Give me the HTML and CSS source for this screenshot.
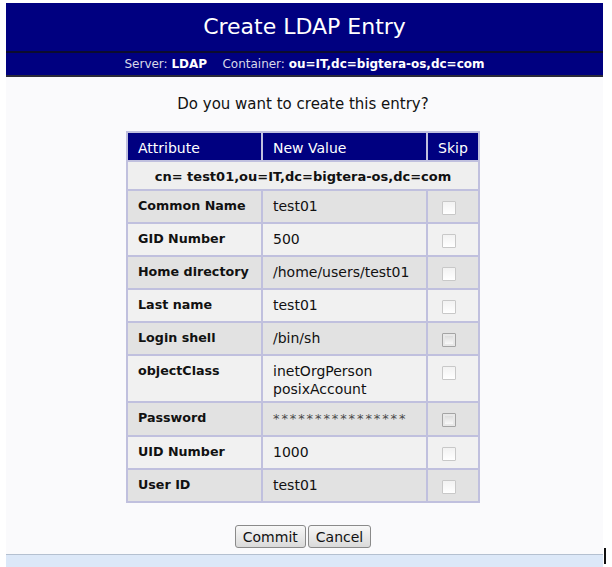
FILE: index.html
```html
<!DOCTYPE html>
<html>
<head>
<meta charset="utf-8">
<link rel="stylesheet" href="styles.css">
</head>
<body>
<div class="page">
  <div class="title">Create LDAP Entry</div>
  <div class="sub">Server: <b>LDAP</b>&nbsp;&nbsp;&nbsp; Container: <b>ou=IT,dc=bigtera-os,dc=com</b></div>
  <div class="content">
    <p class="question">Do you want to create this entry?</p>
    <table class="entry">
      <colgroup><col class="c-attr"><col class="c-val"><col class="c-skip"></colgroup>
      <thead>
        <tr><th>Attribute</th><th>New Value</th><th>Skip</th></tr>
      </thead>
      <tbody>
        <tr class="dn"><td colspan="3">cn= test01,ou=IT,dc=bigtera-os,dc=com</td></tr>
        <tr class="dark"><td class="attr">Common Name</td><td>test01</td><td class="skip"><span class="cb"></span></td></tr>
        <tr class="light"><td class="attr">GID Number</td><td>500</td><td class="skip"><span class="cb"></span></td></tr>
        <tr class="dark"><td class="attr">Home directory</td><td>/home/users/test01</td><td class="skip"><span class="cb"></span></td></tr>
        <tr class="light"><td class="attr">Last name</td><td>test01</td><td class="skip"><span class="cb"></span></td></tr>
        <tr class="dark"><td class="attr">Login shell</td><td>/bin/sh</td><td class="skip"><span class="cb cb-hover"></span></td></tr>
        <tr class="light"><td class="attr">objectClass</td><td>inetOrgPerson<br>posixAccount</td><td class="skip"><span class="cb"></span></td></tr>
        <tr class="dark"><td class="attr">Password</td><td class="pw">****************</td><td class="skip"><span class="cb cb-hover"></span></td></tr>
        <tr class="light"><td class="attr">UID Number</td><td>1000</td><td class="skip"><span class="cb"></span></td></tr>
        <tr class="dark"><td class="attr">User ID</td><td>test01</td><td class="skip"><span class="cb"></span></td></tr>
      </tbody>
    </table>
    <div class="buttons">
      <button class="btn">Commit</button>
      <button class="btn">Cancel</button>
    </div>
  </div>
  <div class="footer"></div>
</div>
<span class="cursor"></span>
</body>
</html>
```
FILE: styles.css
```css
html, body {
  margin: 0;
  padding: 0;
  background: #ffffff;
}
body {
  font-family: "DejaVu Sans", Verdana, sans-serif;
  position: relative;
  height: 567px;
  overflow: hidden;
}
.page {
  margin: 3px 9px 0 6px;
  width: 597px;
}
.title {
  background: #000080;
  color: #ffffff;
  height: 48px;
  line-height: 48px;
  text-align: center;
  font-size: 22px;
  border-bottom: 2px solid #0c0c2e;
}
.sub {
  background: #000080;
  color: #d8d8e8;
  height: 22px;
  line-height: 22px;
  text-align: center;
  font-size: 12px;
  border-bottom: 2px solid #2a2a3a;
}
.sub b {
  color: #ffffff;
}
.content {
  background: #fafafc;
  padding: 18px 3px 6px 0;
}
.question {
  margin: 0 0 18px;
  text-align: center;
  font-size: 15px;
  line-height: 18px;
  color: #111;
}
.entry {
  margin: 0 auto;
  width: 352px;
  table-layout: fixed;
  border-collapse: collapse;
  border: 2px solid #c0c0de;
  font-size: 14px;
  color: #111;
}
.c-attr { width: 135px; }
.c-val { width: 165px; }
.c-skip { width: 52px; }
.entry th, .entry td {
  border: 2px solid #c0c0de;
  text-align: left;
  vertical-align: top;
  white-space: nowrap;
}
.entry th {
  background: #000080;
  color: #ffffff;
  font-weight: normal;
  line-height: 17px;
  padding: 7px 4px 3px 10px;
}
.entry td {
  padding: 6px 4px 3px 10px;
  line-height: 18px;
  height: 22px;
}
.entry tr.dn td {
  background: #efefef;
  font-weight: bold;
  font-size: 13px;
  text-align: center;
  line-height: 17px;
  height: auto;
  padding: 6px 4px 4px;
}
.entry tr.dark td { background: #e2e2e2; }
.entry tr.light td { background: #f1f1f1; }
.entry td.attr {
  font-weight: bold;
  font-size: 12.7px;
}
.entry td.skip {
  padding-left: 14px;
  padding-top: 10px;
  height: 18px;
}
.entry td.pw {
  font-size: 13px;
  letter-spacing: 1.9px;
  color: #4a4a4a;
  padding-top: 7px;
  height: 22px;
}
.cb {
  display: block;
  width: 12px;
  height: 12px;
  border: 1px solid #c8c8c8;
  background: linear-gradient(#f2f2f2, #ffffff);
  border-radius: 1px;
}
.cb-hover {
  border-color: #a4a4a4;
  box-shadow: inset 0 0 0 2px #e8e8e8;
  background: linear-gradient(#d6d6d6, #ffffff);
}
.buttons {
  margin-top: 22px;
  display: flex;
  justify-content: center;
  gap: 2px;
}
.btn {
  font-family: "DejaVu Sans", Verdana, sans-serif;
  font-size: 14px;
  height: 23px;
  padding: 0 7px;
  margin: 0;
  border: 1px solid #8a8a8a;
  border-radius: 3px;
  background: linear-gradient(#f8f8f8, #dadada);
  color: #111;
}
.footer {
  height: 13px;
  border-top: 1px solid #b4c0d0;
  background: #dce8f8;
}
.cursor {
  position: absolute;
  left: 604px;
  top: 548px;
  width: 2px;
  height: 16px;
  background: #111;
}
```
